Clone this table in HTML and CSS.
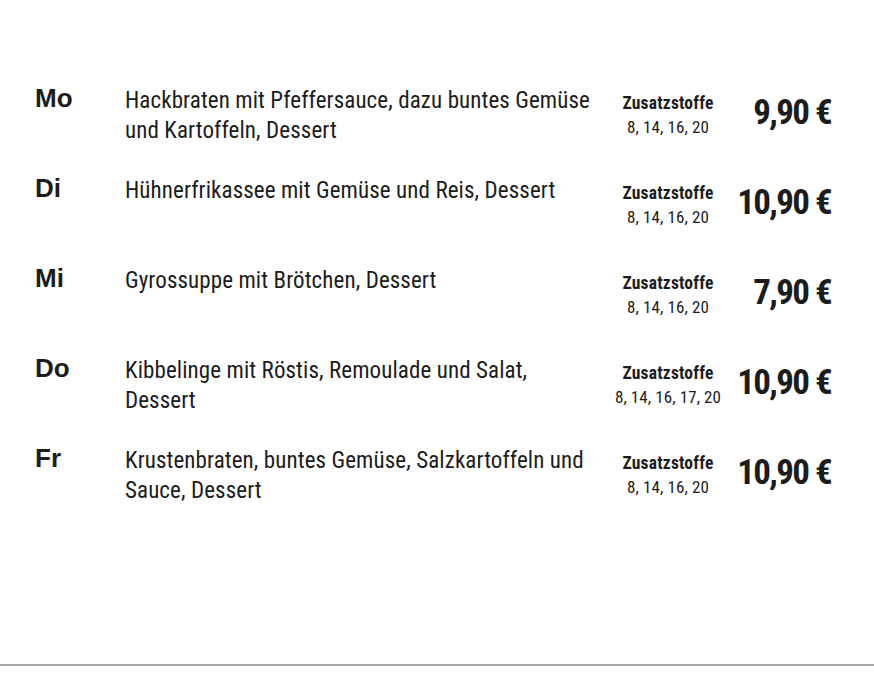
FILE: index.html
```html
<!DOCTYPE html>
<html lang="de">
<head>
<meta charset="utf-8">
<title>Wochenkarte</title>
<link rel="stylesheet" href="styles.css">
</head>
<body>
<main class="page">
  <section class="menu">
    <div class="row">
      <div class="day">Mo</div>
      <div class="desc">Hackbraten mit Pfeffersauce, dazu buntes Gemüse und Kartoffeln, Dessert</div>
      <div class="zs"><div class="zs-title">Zusatzstoffe</div><div class="zs-nums">8, 14, 16, 20</div></div>
      <div class="price">9,90 €</div>
    </div>
    <div class="row">
      <div class="day">Di</div>
      <div class="desc">Hühnerfrikassee mit Gemüse und Reis, Dessert</div>
      <div class="zs"><div class="zs-title">Zusatzstoffe</div><div class="zs-nums">8, 14, 16, 20</div></div>
      <div class="price">10,90 €</div>
    </div>
    <div class="row">
      <div class="day">Mi</div>
      <div class="desc">Gyrossuppe mit Brötchen, Dessert</div>
      <div class="zs"><div class="zs-title">Zusatzstoffe</div><div class="zs-nums">8, 14, 16, 20</div></div>
      <div class="price">7,90 €</div>
    </div>
    <div class="row">
      <div class="day">Do</div>
      <div class="desc">Kibbelinge mit Röstis, Remoulade und Salat, Dessert</div>
      <div class="zs"><div class="zs-title">Zusatzstoffe</div><div class="zs-nums">8, 14, 16, 17, 20</div></div>
      <div class="price">10,90 €</div>
    </div>
    <div class="row">
      <div class="day">Fr</div>
      <div class="desc">Krustenbraten, buntes Gemüse, Salzkartoffeln und Sauce, Dessert</div>
      <div class="zs"><div class="zs-title">Zusatzstoffe</div><div class="zs-nums">8, 14, 16, 20</div></div>
      <div class="price">10,90 €</div>
    </div>
  </section>
  <hr class="rule">
</main>
</body>
</html>
```
FILE: styles.css
```css
html, body {
  margin: 0;
  padding: 0;
  background: #ffffff;
}
.page {
  width: 874px;
  height: 675px;
  display: flex;
  flex-direction: column;
  color: #1c1c1c;
}
.menu {
  width: 796px;
  padding: 87px 0 0 35px;
  display: flex;
  flex-direction: column;
}
.row {
  height: 90px;
  display: grid;
  grid-template-columns: 90px 475px 136px 1fr;
  align-items: start;
}
.day {
  font-family: "Liberation Sans", Arial, sans-serif;
  font-weight: bold;
  font-size: 26px;
  line-height: 26px;
  margin-top: -2px;
}
.desc {
  font-family: "Roboto Condensed", "Liberation Sans", sans-serif;
  font-size: 23px;
  line-height: 30px;
  letter-spacing: 0.1px;
  margin-top: -1px;
}
.zs {
  font-family: "Roboto Condensed", "Liberation Sans", sans-serif;
  text-align: center;
  padding-top: 6px;
}
.zs-title {
  font-weight: bold;
  font-size: 17.5px;
  line-height: 20px;
  letter-spacing: 0.2px;
}
.zs-nums {
  font-size: 17px;
  line-height: 24px;
  margin-top: 2px;
  letter-spacing: 0.1px;
}
.price {
  justify-self: end;
  font-family: "Roboto Condensed", "Liberation Sans", sans-serif;
  font-weight: bold;
  font-size: 35px;
  line-height: 40px;
  padding-top: 6px;
  letter-spacing: -1.6px;
  white-space: nowrap;
}
.rule {
  margin: auto 0 9px 0;
  border: 0;
  border-top: 2px solid #a8a8a8;
  height: 0;
}
```
